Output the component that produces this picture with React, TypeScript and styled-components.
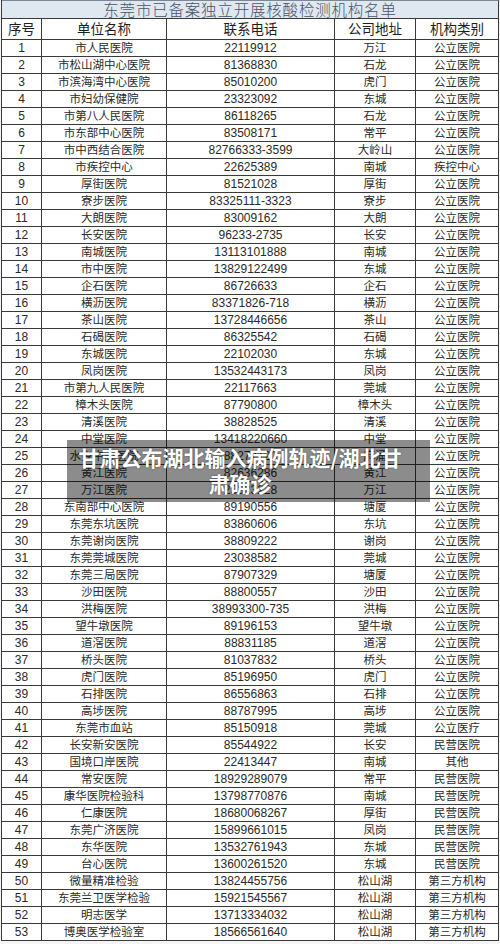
import React from "react";
import styled, { createGlobalStyle } from "styled-components";

type Entry = [string, string, string, string];

const rows: Entry[] = [
  ["市人民医院", "22119912", "万江", "公立医院"],
  ["市松山湖中心医院", "81368830", "石龙", "公立医院"],
  ["市滨海湾中心医院", "85010200", "虎门", "公立医院"],
  ["市妇幼保健院", "23323092", "东城", "公立医院"],
  ["市第八人民医院", "86118265", "石龙", "公立医院"],
  ["市东部中心医院", "83508171", "常平", "公立医院"],
  ["市中西结合医院", "82766333-3599", "大岭山", "公立医院"],
  ["市疾控中心", "22625389", "南城", "疾控中心"],
  ["厚街医院", "81521028", "厚街", "公立医院"],
  ["寮步医院", "83325111-3323", "寮步", "公立医院"],
  ["大朗医院", "83009162", "大朗", "公立医院"],
  ["长安医院", "96233-2735", "长安", "公立医院"],
  ["南城医院", "13113101888", "南城", "公立医院"],
  ["市中医院", "13829122499", "东城", "公立医院"],
  ["企石医院", "86726633", "企石", "公立医院"],
  ["横沥医院", "83371826-718", "横沥", "公立医院"],
  ["茶山医院", "13728446656", "茶山", "公立医院"],
  ["石碣医院", "86325542", "石碣", "公立医院"],
  ["东城医院", "22102030", "东城", "公立医院"],
  ["凤岗医院", "13532443173", "凤岗", "公立医院"],
  ["市第九人民医院", "22117663", "莞城", "公立医院"],
  ["樟木头医院", "87790800", "樟木头", "公立医院"],
  ["清溪医院", "38828525", "清溪", "公立医院"],
  ["中堂医院", "13418220660", "中堂", "公立医院"],
  ["水乡中心医院", "88277120", "麻涌", "公立医院"],
  ["黄江医院", "82636286", "黄江", "公立医院"],
  ["万江医院", "23823228", "万江", "公立医院"],
  ["东南部中心医院", "89190556", "塘厦", "公立医院"],
  ["东莞东坑医院", "83860606", "东坑", "公立医院"],
  ["东莞谢岗医院", "38809222", "谢岗", "公立医院"],
  ["东莞莞城医院", "23038582", "莞城", "公立医院"],
  ["东莞三局医院", "87907329", "塘厦", "公立医院"],
  ["沙田医院", "88800557", "沙田", "公立医院"],
  ["洪梅医院", "38993300-735", "洪梅", "公立医院"],
  ["望牛墩医院", "89196153", "望牛墩", "公立医院"],
  ["道滘医院", "88831185", "道滘", "公立医院"],
  ["桥头医院", "81037832", "桥头", "公立医院"],
  ["虎门医院", "85196950", "虎门", "公立医院"],
  ["石排医院", "86556863", "石排", "公立医院"],
  ["高埗医院", "88787995", "高埗", "公立医院"],
  ["东莞市血站", "85150918", "莞城", "公立医疗"],
  ["长安新安医院", "85544922", "长安", "民营医院"],
  ["国境口岸医院", "22413447", "南城", "其他"],
  ["常安医院", "18929289079", "常平", "民营医院"],
  ["康华医院检验科", "13798770876", "南城", "民营医院"],
  ["仁康医院", "18680068267", "厚街", "民营医院"],
  ["东莞广济医院", "15899661015", "凤岗", "民营医院"],
  ["东华医院", "13532761943", "东城", "民营医院"],
  ["台心医院", "13600261520", "东城", "民营医院"],
  ["微量精准检验", "13824455756", "松山湖", "第三方机构"],
  ["东莞兰卫医学检验", "15921545567", "松山湖", "第三方机构"],
  ["明志医学", "13713334032", "松山湖", "第三方机构"],
  ["博奥医学检验室", "18566561640", "松山湖", "第三方机构"],
];

const App: React.FC = () => {
  return (
    <Page>
      <GlobalStyle />
      <Sheet>
        <TitleBar>东莞市已备案独立开展核酸检测机构名单</TitleBar>
        <HeadRow>
          <HeadCell>序号</HeadCell>
          <HeadCell>单位名称</HeadCell>
          <HeadCell>联系电话</HeadCell>
          <HeadCell>公司地址</HeadCell>
          <HeadCell>机构类别</HeadCell>
        </HeadRow>
        {rows.map(([name, phone, place, kind], i) => (
          <Row key={i}>
            <Cell $num>{i + 1}</Cell>
            <Cell>{name}</Cell>
            <Cell $num>{phone}</Cell>
            <Cell>{place}</Cell>
            <Cell>{kind}</Cell>
          </Row>
        ))}
      </Sheet>
      <Caption>
        <CaptionText>甘肃公布湖北输入病例轨迹/湖北甘肃确诊</CaptionText>
      </Caption>
    </Page>
  );
};

export default App;

const GlobalStyle = createGlobalStyle`
  body {
    margin: 0;
    background: #ffffff;
    font-family: "Liberation Sans", "Noto Sans CJK SC", sans-serif;
  }
`;

const Page = styled.div`
  position: relative;
  width: 500px;
  height: 944px;
  overflow: hidden;
  background: #f4f4f4;
`;

const Sheet = styled.div`
  width: 498px;
  margin-left: 1px;
  border-left: 1px solid #3a3a3a;
  box-sizing: border-box;
  background: #ffffff;
`;

const TitleBar = styled.div`
  height: 19px;
  box-sizing: border-box;
  border-top: 1px solid #7a8796;
  border-right: 1px solid #3a3a3a;
  border-bottom: 1px solid #3a3a3a;
  background: #dfe7f1;
  color: #4a5564;
  display: flex;
  align-items: center;
  justify-content: center;
  font-family: "Noto Sans CJK SC", sans-serif;
  font-size: 15.5px;
  font-weight: 300;
  line-height: 1;
  letter-spacing: 0.8px;
`;

const Row = styled.div`
  display: grid;
  grid-template-columns: 40px 125px 168px 81px 83px;
  height: 17px;
`;

const HeadRow = styled(Row)`
  height: 21px;
`;

const Cell = styled.div<{ $num?: boolean }>`
  box-sizing: border-box;
  border-right: 1px solid #3a3a3a;
  border-bottom: 1px solid #3a3a3a;
  display: flex;
  align-items: center;
  justify-content: center;
  color: #2a2a2a;
  font-family: ${(p) =>
    p.$num
      ? `"Liberation Sans", "Noto Sans CJK SC", sans-serif`
      : `"Noto Sans CJK SC", sans-serif`};
  font-size: ${(p) => (p.$num ? "12px" : "11.5px")};
  line-height: 1;
  white-space: nowrap;
`;

const HeadCell = styled(Cell)`
  font-family: "Noto Sans CJK SC", sans-serif;
  font-size: 13.5px;
  color: #1e1e1e;
`;

const Caption = styled.div`
  position: absolute;
  left: 67px;
  top: 440px;
  width: 363px;
  height: 62px;
  box-sizing: border-box;
  padding: 4px 24px 0 7px;
  background: rgba(0, 0, 0, 0.45);
`;

const CaptionText = styled.div`
  color: #ffffff;
  font-family: "Noto Sans CJK SC", sans-serif;
  font-size: 21px;
  font-weight: 700;
  line-height: 26px;
  text-align: center;
  text-shadow: 0 0 2px rgba(0, 0, 0, 0.5);
`;
